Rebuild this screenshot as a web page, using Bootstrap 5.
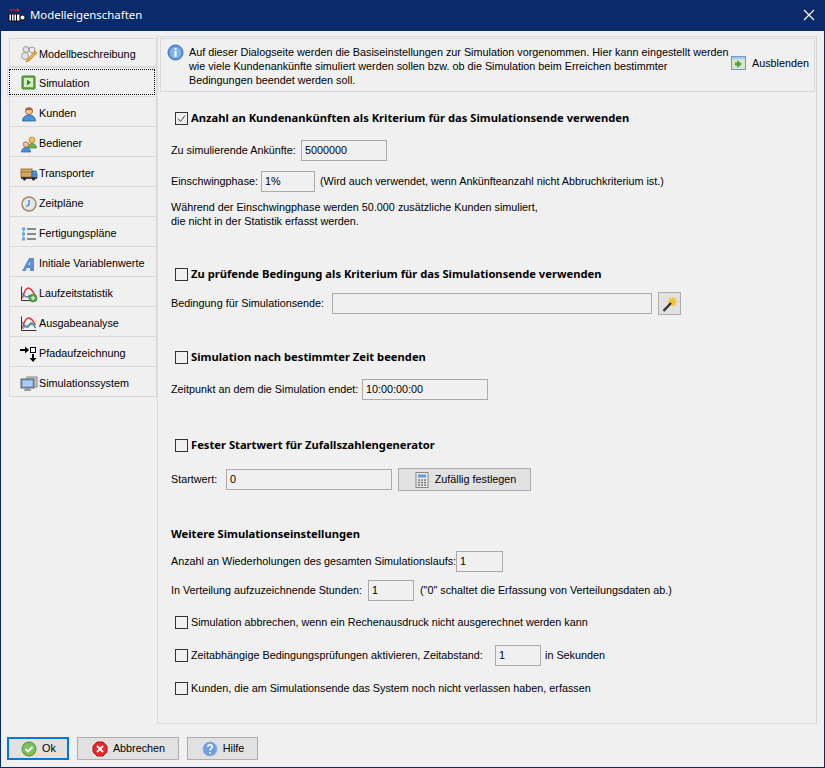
<!DOCTYPE html>
<html lang="de">
<head>
    <meta charset="UTF-8">
    <title>Modelleigenschaften</title>
    <link href="https://cdn.jsdelivr.net/npm/bootstrap@5.3.0/dist/css/bootstrap.min.css" rel="stylesheet">
    <style>
        html, body { height: 100%; margin: 0; }
        body { font-family: "Liberation Sans", sans-serif; font-size: 10.8px; color: #000; background: #f0f0f0; overflow: hidden; }
        .dlg { width: 825px; height: 768px; border: solid #0a2a6b; border-width: 0 1px 1px 1px; background: #f0f0f0; }
        .dlg-title { height: 31px; background: #0a2a6b; color: #fff; font-size: 11.4px; padding: 0 0 2px 7px; font-family: "Noto Sans", sans-serif; }
        .dlg-close { width: 14px; height: 14px; margin-right: 8px; }
        .dlg-main { height: 693px; padding: 5px 7px 0 8px; }
        .side { width: 149px; padding-top: 2px; }
        .side-item { height: 30px; border: 1px solid #d8d8d8; border-top: 0; padding: 4px 0 0 10px; gap: 1px; }
        .side-item:first-child { border-top: 1px solid #d8d8d8; height: 29px; padding-top: 3px; }
        .side-item.sel { margin-left: -2px; border: 1px solid #dcdcdc; padding: 1px; }
        .sel-in { border: 1px dotted #000; width: 100%; height: 100%; padding: 2px 0 0 10px; gap: 1px; }
        .ico { width: 18px; height: 18px; flex: none; }
        .pane { width: 660px; border: 1px solid #dcdcdc; border-right-color: #d4d4d4; padding: 1px 1px 0 2px; }
        .info { height: 54px; border: 1px solid #d8d8d8; padding: 5px 5px 0 6px; line-height: 14px; }
        .info-txt { width: 544px; padding-top: 1px; white-space: nowrap; }
        .info-ico { width: 17px; height: 17px; margin-right: 5px; flex: none; }
        .hide-link { margin-left: auto; gap: 4px; margin-bottom: 9px; }
        .body-wrap { padding-left: 11px; }
        .rowx { height: 21px; white-space: nowrap; }
        .hd { font-weight: 700; font-size: 11.2px; font-family: "Noto Sans", sans-serif; }
        .chk { width: 13px; height: 13px; border: 1px solid #333; flex: none; margin: 0 3px 0 4px; }
        .chk svg { display: block; }
        .fld { height: 21px; line-height: 19px; border: 1px solid #aaa; background: #f0f0f0; padding-left: 3px; flex: none; }
        .lb-130 { width: 130px; } .lb-90 { width: 90px; } .lb-161 { width: 161px; } .lb-191 { width: 191px; } .lb-55 { width: 55px; } .lb-285 { width: 285px; } .lb-197 { width: 197px; } .lb-304 { width: 304px; }
        .w-85 { width: 86px; } .w-54 { width: 54px; } .w-320 { width: 320px; } .w-126 { width: 126px; } .w-166 { width: 166px; } .w-47 { width: 47px; } .w-46 { width: 46px; }
        .ml-6 { margin-left: 6px; } .ml-5 { margin-left: 5px; } .ml-4 { margin-left: 4px; }
        .wand { width: 23px; height: 23px; background: #e1e1e1; border: 1px solid #adadad; margin-left: 6px; }
        .grey-btn { height: 23px; background: #e1e1e1; border: 1px solid #adadad; gap: 4px; }
        .rnd { width: 133px; margin-left: 6px; }
        .lines { line-height: 14px; }
        .s6 { margin-top: 6px; } .s8 { margin-top: 8px; } .s10 { margin-top: 10px; } .s11 { margin-top: 11px; } .s12 { margin-top: 12px; } .s13 { margin-top: 13px; } .s16 { margin-top: 16px; } .s33 { margin-top: 33px; } .s34 { margin-top: 34px; } .s35 { margin-top: 35px; } .s36 { margin-top: 36px; }
        .foot { padding: 13px 0 0 6px; gap: 8px; }
        .foot-btn { height: 23px; background: #e1e1e1; border: 1px solid #adadad; gap: 4px; }
        .foot-btn.ok { width: 62px; border: 2px solid #0078d7; }
        .b-abbr { width: 102px; } .b-hilfe { width: 71px; }
    </style>
</head>
<body>
<div class="dlg d-flex flex-column">
    <div class="dlg-title d-flex align-items-center">
        <svg class="ico me-1" viewBox="0 0 18 18"><path d="M1 4h10" stroke="#e02020" stroke-width="1"/><path d="M9 2l3 2-3 2z" fill="#e02020"/><rect x="1" y="8" width="11" height="7" fill="#fff" stroke="#111"/><path d="M3.500 8v7M6 8v7M8.500 8v7" stroke="#111"/><circle cx="14.500" cy="11.500" r="2.500" fill="#fff" stroke="#111"/></svg>
        <span>Modelleigenschaften</span>
        <svg class="dlg-close ms-auto" viewBox="0 0 14 14"><path d="M2 2l10 10M12 2L2 12" stroke="#fff" stroke-width="1.200"/></svg>
    </div>
    <div class="dlg-main d-flex">
        <div class="side">
            <div class="side-item d-flex align-items-center">
                <svg class="ico" viewBox="0 0 18 18"><circle cx="6" cy="4.500" r="3" fill="#e4e4e4" stroke="#999"/><circle cx="12" cy="5" r="3" fill="#ececec" stroke="#999"/><circle cx="5" cy="11" r="3.500" fill="#e4e4e4" stroke="#999"/><path d="M7 15l8-9 2 2-8 8-3 1z" fill="#f0b040" stroke="#b07820" stroke-width=".7"/></svg>
                <span>Modellbeschreibung</span>
            </div>
            <div class="side-item sel">
                <div class="sel-in d-flex align-items-center">
                    <svg class="ico" viewBox="0 0 18 18"><rect x="2" y="2" width="13" height="13" rx="1" fill="#62b044" stroke="#3a7d2a"/><rect x="4" y="4" width="9" height="9" fill="#d6ecc4"/><path d="M7 5.500l4 3-4 3z" fill="#2f8a22"/></svg>
                    <span>Simulation</span>
                </div>
            </div>
            <div class="side-item d-flex align-items-center">
                <svg class="ico" viewBox="0 0 18 18"><circle cx="9" cy="6" r="3.600" fill="#f0c090" stroke="#a06030" stroke-width=".8"/><path d="M5.400 5.500c.5-3 6.700-3 7.200 0-2-1-5-1-7.200 0z" fill="#8a4a20"/><path d="M2.500 16c0-4 3-6 6.500-6s6.500 2 6.500 6z" fill="#4a90dc" stroke="#2a60a0" stroke-width=".8"/></svg>
                <span>Kunden</span>
            </div>
            <div class="side-item d-flex align-items-center">
                <svg class="ico" viewBox="0 0 18 18"><circle cx="12" cy="5" r="3" fill="#f0c060" stroke="#b08030" stroke-width=".7"/><path d="M8 13c0-3 2-4.500 4-4.500s4.500 1.500 4.500 4.500z" fill="#6cb050" stroke="#3c8030" stroke-width=".7"/><circle cx="6" cy="9.500" r="2.800" fill="#f0c090" stroke="#a06030" stroke-width=".7"/><path d="M1.500 17c0-3 2-4.500 4.500-4.500s4.500 1.500 4.500 4.500z" fill="#4a90dc" stroke="#2a60a0" stroke-width=".7"/></svg>
                <span>Bediener</span>
            </div>
            <div class="side-item d-flex align-items-center">
                <svg class="ico" viewBox="0 0 18 18"><rect x="1" y="4" width="11" height="8" fill="#d9a860" stroke="#8a6430" stroke-width=".8"/><path d="M1 7h11" stroke="#8a6430" stroke-width=".8"/><path d="M12 6h4l1 3v4h-5z" fill="#4a90dc" stroke="#2a60a0" stroke-width=".8"/><rect x="1" y="12" width="16" height="2" fill="#444"/><circle cx="4.500" cy="14" r="1.500" fill="#222"/><circle cx="13.500" cy="14" r="1.500" fill="#222"/></svg>
                <span>Transporter</span>
            </div>
            <div class="side-item d-flex align-items-center">
                <svg class="ico" viewBox="0 0 18 18"><circle cx="9" cy="9" r="7" fill="#dfe8f2" stroke="#a88a5c" stroke-width="1.500"/><path d="M9 5v4.500l-2.500 2" fill="none" stroke="#3a6ea8" stroke-width="1.200"/></svg>
                <span>Zeitpläne</span>
            </div>
            <div class="side-item d-flex align-items-center">
                <svg class="ico" viewBox="0 0 18 18"><path d="M7 4h9M7 9h9M7 14h9" stroke="#222"/><path d="M2 2.500h3v3H2zM2 7.500h3v3H2zM2 12.500h3v3H2z" fill="#6aa0dc"/><path d="M3.500 5.500v2M3.500 10.500v2" stroke="#e0a030"/></svg>
                <span>Fertigungspläne</span>
            </div>
            <div class="side-item d-flex align-items-center">
                <svg class="ico" viewBox="0 0 18 18"><path d="M2 16L9 3h5v13h-4v-3H7l-1.500 3zM8.500 10H10V6.500z" fill="#5f8fd0" fill-rule="evenodd"/></svg>
                <span>Initiale Variablenwerte</span>
            </div>
            <div class="side-item d-flex align-items-center">
                <svg class="ico" viewBox="0 0 18 18"><path d="M1.500 1.500v14h15" fill="none" stroke="#333"/><path d="M2.500 13c2-8 4-10 6-10s4 3 6 6" fill="none" stroke="#d83030" stroke-width="1.300"/><path d="M2.500 8c2 4 5 6 7 2" fill="none" stroke="#3070d0" stroke-width="1.300"/><circle cx="13" cy="13" r="4" fill="#58a848" stroke="#2e7a22" stroke-width=".6"/><path d="M11 13h4M13 11v4" stroke="#fff"/></svg>
                <span>Laufzeitstatistik</span>
            </div>
            <div class="side-item d-flex align-items-center">
                <svg class="ico" viewBox="0 0 18 18"><path d="M1.500 1.500v14h15" fill="none" stroke="#333"/><path d="M2.500 13c2-8 4-10 6-10s5 3 7 7" fill="none" stroke="#d83030" stroke-width="1.300"/><path d="M2.500 7c2 5 5 7 7 3s3-2 6 3" fill="none" stroke="#3070d0" stroke-width="1.300"/><path d="M3 14c3-4 6-5 12-4" fill="none" stroke="#50a040"/></svg>
                <span>Ausgabeanalyse</span>
            </div>
            <div class="side-item d-flex align-items-center">
                <svg class="ico" viewBox="0 0 18 18"><path d="M0 5h6" stroke="#000" stroke-width="2"/><path d="M5 1.500L9 5l-4 3.500z" fill="#000"/><rect x="10.500" y="2.500" width="5" height="5" fill="#fff" stroke="#000"/><path d="M13 9v5" stroke="#000" stroke-width="2"/><path d="M9.500 13h7L13 17z" fill="#000"/></svg>
                <span>Pfadaufzeichnung</span>
            </div>
            <div class="side-item d-flex align-items-center">
                <svg class="ico" viewBox="0 0 18 18"><rect x="7" y="2" width="10" height="10" fill="#c8c8c8" stroke="#888"/><rect x="1" y="4" width="13" height="9" fill="#6a9ad0" stroke="#666"/><rect x="2.500" y="5.500" width="10" height="6" fill="#a8cdf0"/><path d="M5 13h5l1 3H4z" fill="#999"/></svg>
                <span>Simulationssystem</span>
            </div>
        </div>
        <div class="pane">
            <div class="info d-flex">
                <svg class="info-ico" viewBox="0 0 17 17"><circle cx="8.500" cy="8.500" r="7.500" fill="#5b9bdc" stroke="#3a70b0"/><circle cx="8.500" cy="8.500" r="5.500" fill="#7fb5e8"/><rect x="7.500" y="7" width="2" height="6" fill="#fff"/><rect x="7.500" y="4" width="2" height="2" fill="#fff"/></svg>
                <div class="info-txt">Auf dieser Dialogseite werden die Basiseinstellungen zur Simulation vorgenommen. Hier kann eingestellt werden<br>wie viele Kundenankünfte simuliert werden sollen bzw. ob die Simulation beim Erreichen bestimmter<br>Bedingungen beendet werden soll.</div>
                <div class="hide-link d-flex align-items-center">
                    <svg class="ico" viewBox="0 0 18 18"><rect x="1.500" y="2.500" width="14" height="13" fill="#d6e6cc" stroke="#6a9ad0"/><rect x="2" y="3" width="13" height="2" fill="#a8c8e8"/><path d="M7 6v2.500H5v3h2V14l5-4z" fill="#58a040"/></svg>
                    <span>Ausblenden</span>
                </div>
            </div>
            <div class="body-wrap">
                <div class="rowx hd d-flex align-items-center s16">
                    <span class="chk"><svg width="11" height="11" viewBox="0 0 11 11"><path d="M2 5.500l2.500 3L9 2.500" fill="none" stroke="#444" stroke-width="1"/></svg></span>
                    <span>Anzahl an Kundenankünften als Kriterium für das Simulationsende verwenden</span>
                </div>
                <div class="rowx d-flex align-items-center s11">
                    <span class="lb-130">Zu simulierende Ankünfte:</span>
                    <div class="fld w-85">5000000</div>
                </div>
                <div class="rowx d-flex align-items-center s10">
                    <span class="lb-90">Einschwingphase:</span>
                    <div class="fld w-54">1%</div>
                    <span class="ml-5">(Wird auch verwendet, wenn Ankünfteanzahl nicht Abbruchkriterium ist.)</span>
                </div>
                <div class="lines s8">Während der Einschwingphase werden 50.000 zusätzliche Kunden simuliert,<br>die nicht in der Statistik erfasst werden.</div>
                <div class="rowx hd d-flex align-items-center s36">
                    <span class="chk"></span>
                    <span>Zu prüfende Bedingung als Kriterium für das Simulationsende verwenden</span>
                </div>
                <div class="rowx d-flex align-items-center s8">
                    <span class="lb-161">Bedingung für Simulationsende:</span>
                    <div class="fld w-320"></div>
                    <div class="wand d-flex align-items-center justify-content-center">
                        <svg class="ico" viewBox="0 0 18 18"><path d="M11.500 1l1 3 3-1.200-1.200 3 3 1-3 1 1.200 3-3-1.200-1 3-1-3-3 1.200 1.200-3-3-1 3-1-1.200-3 3 1.200z" fill="#f4c430"/><path d="M2.500 16L10 8" stroke="#333" stroke-width="2.500"/></svg>
                    </div>
                </div>
                <div class="rowx hd d-flex align-items-center s33">
                    <span class="chk"></span>
                    <span>Simulation nach bestimmter Zeit beenden</span>
                </div>
                <div class="rowx d-flex align-items-center s11">
                    <span class="lb-191">Zeitpunkt an dem die Simulation endet:</span>
                    <div class="fld w-126">10:00:00:00</div>
                </div>
                <div class="rowx hd d-flex align-items-center s35">
                    <span class="chk"></span>
                    <span>Fester Startwert für Zufallszahlengenerator</span>
                </div>
                <div class="rowx d-flex align-items-center s13">
                    <span class="lb-55">Startwert:</span>
                    <div class="fld w-166">0</div>
                    <div class="grey-btn rnd d-flex align-items-center justify-content-center">
                        <svg class="ico" viewBox="0 0 18 18"><rect x="3" y="1.500" width="12" height="15" fill="#e8e8e8" stroke="#888"/><rect x="5" y="3.500" width="8" height="3" fill="#6a9ad0"/><path d="M5 9h2M8 9h2M11 9h2M5 11.500h2M8 11.500h2M11 11.500h2M5 14h2M8 14h2M11 14h2" stroke="#777" stroke-width="1.500"/></svg>
                        <span>Zufällig festlegen</span>
                    </div>
                </div>
                <div class="rowx hd d-flex align-items-center s34">Weitere Simulationseinstellungen</div>
                <div class="rowx d-flex align-items-center s6">
                    <span class="lb-285">Anzahl an Wiederholungen des gesamten Simulationslaufs:</span>
                    <div class="fld w-47">1</div>
                </div>
                <div class="rowx d-flex align-items-center s8">
                    <span class="lb-197">In Verteilung aufzuzeichnende Stunden:</span>
                    <div class="fld w-46">1</div>
                    <span class="ml-6">("0" schaltet die Erfassung von Verteilungsdaten ab.)</span>
                </div>
                <div class="rowx d-flex align-items-center s11">
                    <span class="chk"></span>
                    <span>Simulation abbrechen, wenn ein Rechenausdruck nicht ausgerechnet werden kann</span>
                </div>
                <div class="rowx d-flex align-items-center s12">
                    <span class="chk"></span>
                    <span class="lb-304">Zeitabhängige Bedingungsprüfungen aktivieren, Zeitabstand:</span>
                    <div class="fld w-46">1</div>
                    <span class="ml-4">in Sekunden</span>
                </div>
                <div class="rowx d-flex align-items-center s12">
                    <span class="chk"></span>
                    <span>Kunden, die am Simulationsende das System noch nicht verlassen haben, erfassen</span>
                </div>
            </div>
        </div>
    </div>
    <div class="foot d-flex">
        <div class="foot-btn ok d-flex align-items-center justify-content-center">
            <svg class="ico" viewBox="0 0 18 18"><circle cx="9" cy="9" r="7" fill="#7cc060" stroke="#4a9040"/><path d="M5.500 9l2.500 2.500L12.500 7" fill="none" stroke="#fff" stroke-width="1.800"/></svg>
            <span>Ok</span>
        </div>
        <div class="foot-btn b-abbr d-flex align-items-center justify-content-center">
            <svg class="ico" viewBox="0 0 18 18"><path d="M6 2h6l4 4v6l-4 4H6l-4-4V6z" fill="#e82828" stroke="#b01818"/><path d="M6 6l6 6M12 6l-6 6" stroke="#fff" stroke-width="2"/></svg>
            <span>Abbrechen</span>
        </div>
        <div class="foot-btn b-hilfe d-flex align-items-center justify-content-center">
            <svg class="ico" viewBox="0 0 18 18"><circle cx="9" cy="9" r="7" fill="#6f9fe0" stroke="#8fb0d8"/><path d="M6.800 7c0-3 4.500-3 4.500 0 0 1.500-2.300 1.500-2.300 3.500" fill="none" stroke="#fff" stroke-width="1.500"/><rect x="8.200" y="12" width="1.600" height="1.600" fill="#fff"/></svg>
            <span>Hilfe</span>
        </div>
    </div>
</div>
<script src="https://cdn.jsdelivr.net/npm/bootstrap@5.3.0/dist/js/bootstrap.bundle.min.js"></script>
</body>
</html>
